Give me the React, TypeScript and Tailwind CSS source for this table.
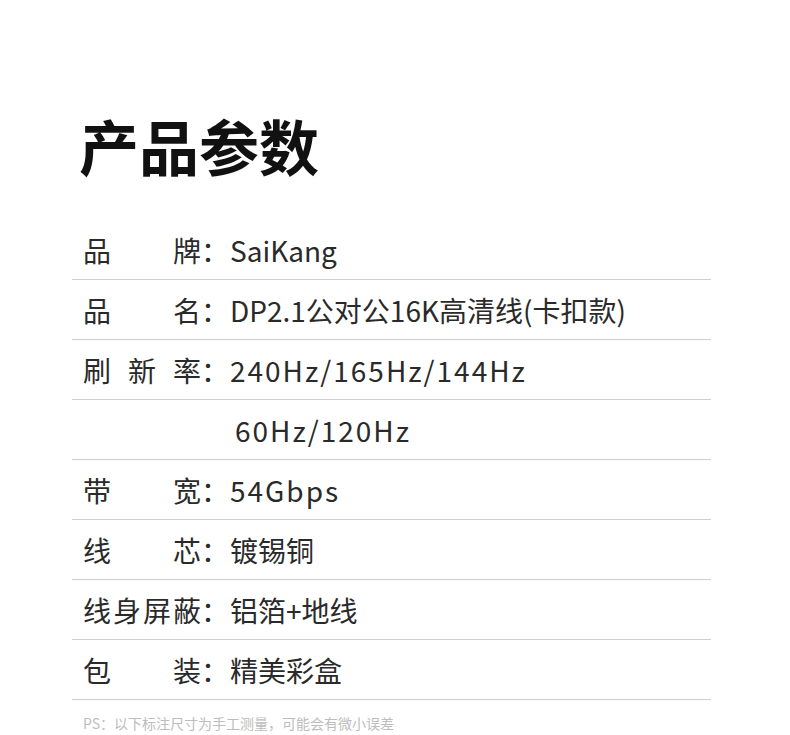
import React from "react";

type Row = {
  label: string[];
  value: string;
  spaced?: boolean;
};

const rows: Row[] = [
  { label: ["品", "牌"], value: "SaiKang" },
  { label: ["品", "名"], value: "DP2.1公对公16K高清线(卡扣款)" },
  { label: ["刷", "新", "率"], value: "240Hz/165Hz/144Hz", spaced: true },
  { label: [], value: "60Hz/120Hz", spaced: true },
  { label: ["带", "宽"], value: "54Gbps", spaced: true },
  { label: ["线", "芯"], value: "镀锡铜" },
  { label: ["线", "身", "屏", "蔽"], value: "铝箔+地线" },
  { label: ["包", "装"], value: "精美彩盒" },
];

export default function App() {
  return (
    <div
      className="w-[790px] h-[735px] bg-white text-[#2a2a2a] overflow-hidden"
      style={{ fontFamily: '"Noto Sans CJK SC", "Noto Sans", sans-serif' }}
    >
      <h1 className="pl-[79px] pt-[115px] text-[60px] leading-[60px] font-bold text-[#111]">
        产品参数
      </h1>

      {/* 参数表 */}
      <div className="mt-[45px] mx-[72px] w-[639px]">
        {rows.map((row, i) => (
          <div
            key={i}
            className="h-[60px] flex items-center border-b border-[#cfcfcf] pl-[11px] text-[28px] leading-none"
          >
            {row.label.length > 0 ? (
              <>
                <div className="w-[118px] flex justify-between">
                  {row.label.map((ch, j) => (
                    <span key={j}>{ch}</span>
                  ))}
                </div>
                <span className="w-[29px]">：</span>
              </>
            ) : (
              <div className="w-[152px]" />
            )}
            <span className={row.spaced ? "tracking-[2px]" : ""}>{row.value}</span>
          </div>
        ))}
      </div>

      <p className="pl-[83px] pt-[16px] text-[14px] leading-none text-[#bdbdbd]">
        PS：以下标注尺寸为手工测量，可能会有微小误差
      </p>
    </div>
  );
}
